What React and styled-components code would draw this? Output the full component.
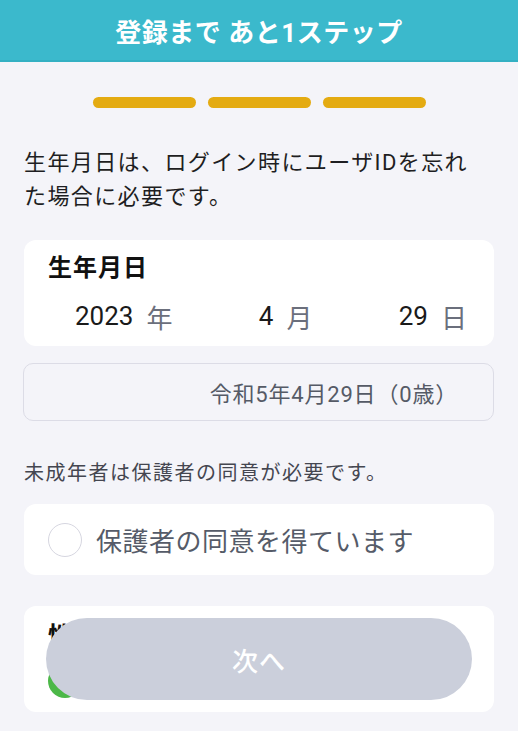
import React from 'react';
import styled, { createGlobalStyle } from 'styled-components';

const GlobalStyle = createGlobalStyle`
  body {
    margin: 0;
    background: #f4f4f9;
    font-family: Roboto, "Noto Sans CJK JP", sans-serif;
    color: #1e1e22;
  }
`;

const Page = styled.div`
  min-height: 731px;
  padding-bottom: 20px;
`;

const Header = styled.header`
  height: 60px;
  background: #3bb9cc;
  border-bottom: 2px solid #33b0c3;
  display: flex;
  align-items: center;
  justify-content: center;
  color: #fff;
  font-size: 26px;
  font-weight: 700;
  letter-spacing: 0.5px;
`;

const Steps = styled.div`
  display: flex;
  justify-content: center;
  gap: 12px;
  margin-top: 35px;
`;

const Step = styled.div`
  width: 103px;
  height: 11px;
  border-radius: 6px;
  background: ${p => (p.done ? '#e4ab12' : '#dcdce4')};
`;

const Body = styled.main`
  padding: 0 24px;
`;

const Lead = styled.p`
  margin: 38px 0 0;
  padding-right: 18px;
  font-size: 22px;
  line-height: 34px;
  letter-spacing: 1.4px;
  color: #1e1e22;
`;

const Card = styled.section`
  background: #fff;
  border-radius: 12px;
  margin-top: ${p => p.gap || 17}px;
`;

const DateCard = styled(Card)`
  padding: 12px 24px 12px 24px;
`;

const CardTitle = styled.h2`
  margin: 0;
  font-size: 24px;
  line-height: 32px;
  font-weight: 700;
  color: #111;
  letter-spacing: 1px;
`;

const DateRow = styled.div`
  display: flex;
  justify-content: space-between;
  align-items: center;
  margin-top: 14px;
  padding: 0 3px 0 27px;
  height: 36px;
`;

const DatePart = styled.div`
  display: flex;
  align-items: center;
  gap: 13px;
`;

const Num = styled.span`
  font-size: 26px;
  color: #1a1a1a;
`;

const Unit = styled.span`
  font-size: 26px;
  color: #6b6f7c;
`;

const Field = styled.div`
  height: 56px;
  margin: 17px 0 0 -1px;
  border: 1px solid #dcdce6;
  border-radius: 10px;
  display: flex;
  align-items: center;
  justify-content: flex-end;
  padding-right: 35px;
  font-size: 22px;
  letter-spacing: 0.8px;
  color: #555a66;
`;

const Note = styled.p`
  margin: 38px 0 0;
  font-size: 20px;
  line-height: 28px;
  letter-spacing: 1.5px;
  color: #444650;
`;

const RadioCard = styled(Card)`
  height: 71px;
  padding: 0 24px;
  display: flex;
  align-items: center;
  gap: 14px;
`;

const Radio = styled.span`
  width: 34px;
  height: 34px;
  border-radius: 50%;
  box-sizing: border-box;
  border: ${p => (p.checked ? 'none' : '1px solid #d6d6e0')};
  background: ${p => (p.checked ? '#4cb848' : '#fff')};
  flex-shrink: 0;
`;

const RadioLabel = styled.span`
  font-size: 26px;
  color: #555b68;
  letter-spacing: 0.5px;
`;

const GenderCard = styled(Card)`
  height: 106px;
  padding: 14px 24px 0;
  box-sizing: border-box;
`;

const GenderRow = styled.div`
  display: flex;
  align-items: center;
  gap: 14px;
  margin-top: 10px;
`;

const NextButton = styled.button`
  position: fixed;
  left: 46px;
  right: 46px;
  bottom: 31px;
  height: 82px;
  border: none;
  border-radius: 41px;
  background: #cbcfdb;
  color: #fff;
  font-family: Roboto, "Noto Sans CJK JP", sans-serif;
  font-size: 26px;
  font-weight: 500;
  letter-spacing: 1px;
`;

export default function App() {
  return (
    <Page>
      <GlobalStyle />
      <Header>登録まで あと1ステップ</Header>
      <Steps>
        <Step done />
        <Step done />
        <Step done />
      </Steps>
      <Body>
        <Lead>生年月日は、ログイン時にユーザIDを忘れた場合に必要です。</Lead>
        <DateCard gap={26}>
          <CardTitle>生年月日</CardTitle>
          <DateRow>
            <DatePart><Num>2023</Num><Unit>年</Unit></DatePart>
            <DatePart><Num>4</Num><Unit>月</Unit></DatePart>
            <DatePart><Num>29</Num><Unit>日</Unit></DatePart>
          </DateRow>
        </DateCard>
        <Field>令和5年4月29日（0歳）</Field>
        <Note>未成年者は保護者の同意が必要です。</Note>
        <RadioCard>
          <Radio />
          <RadioLabel>保護者の同意を得ています</RadioLabel>
        </RadioCard>
        <GenderCard gap={31}>
          <CardTitle>性別</CardTitle>
          <GenderRow>
            <Radio checked />
            <RadioLabel>男性</RadioLabel>
          </GenderRow>
        </GenderCard>
      </Body>
      <NextButton>次へ</NextButton>
    </Page>
  );
}
